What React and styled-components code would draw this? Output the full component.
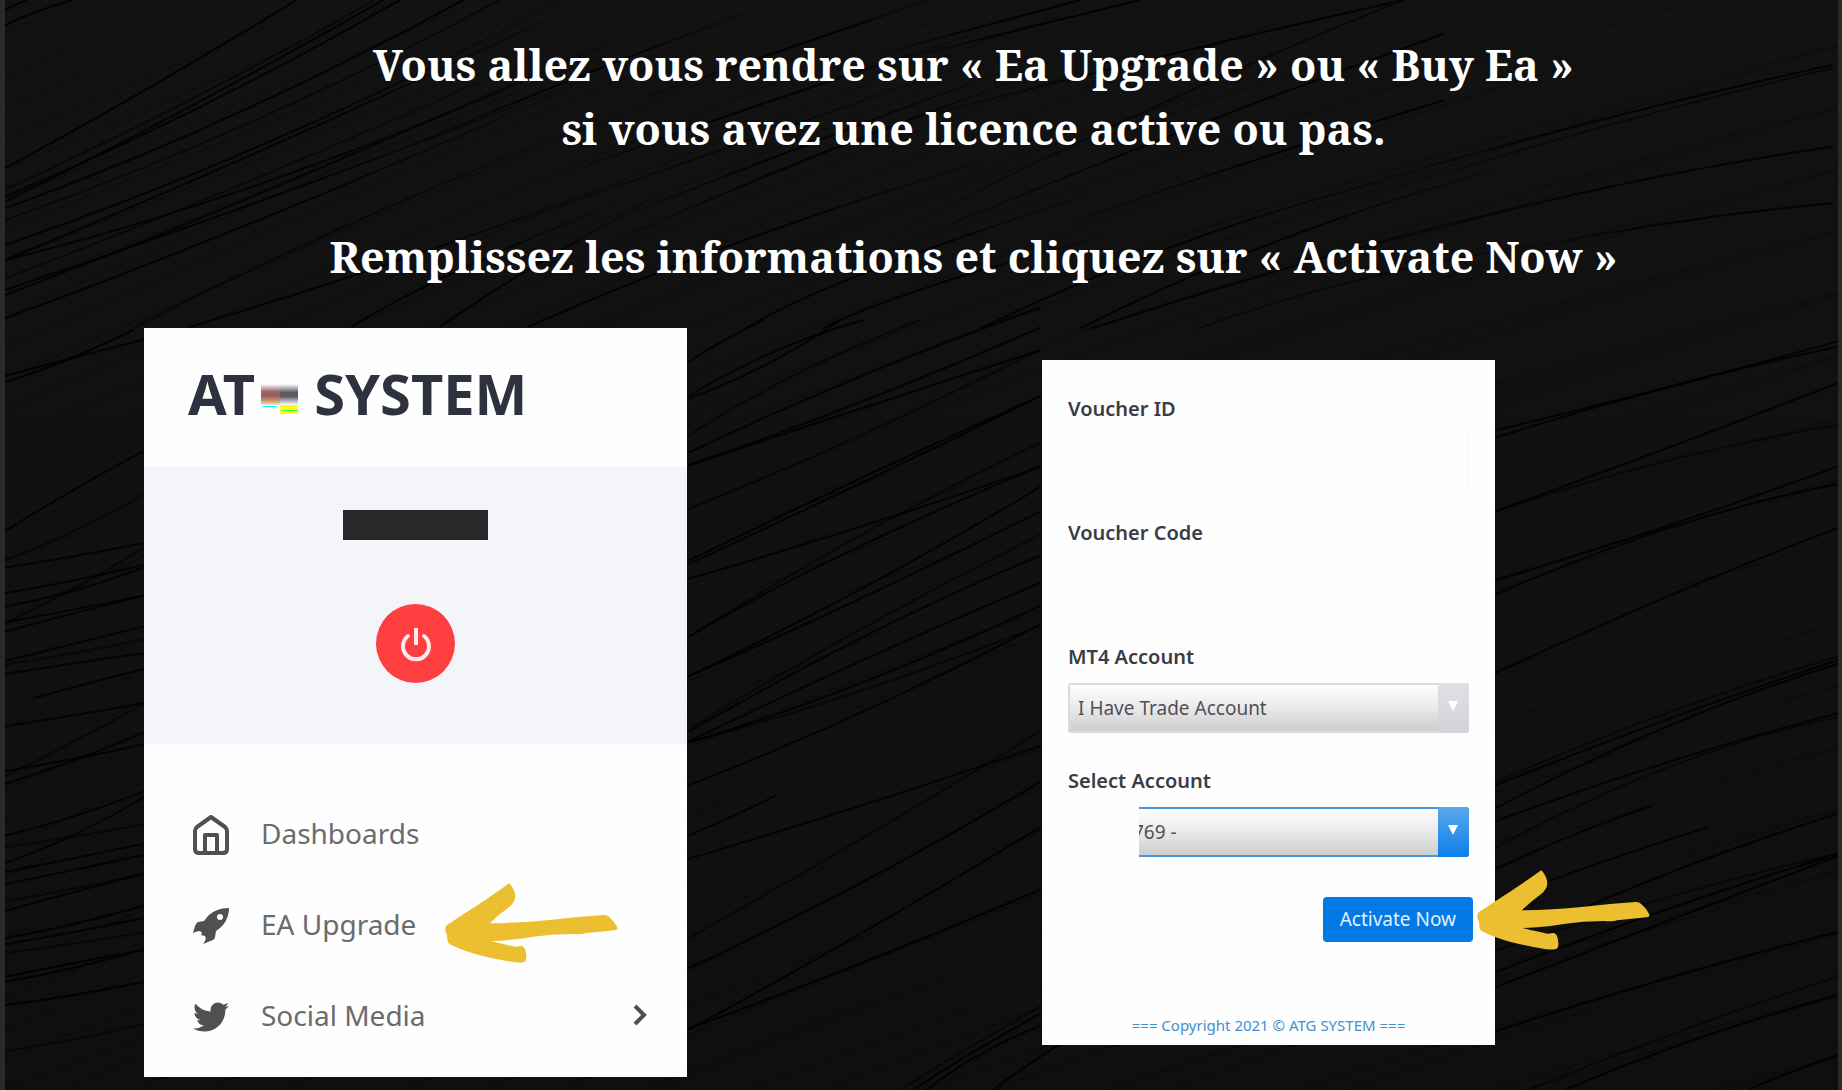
import React from 'react';
import styled, { createGlobalStyle } from 'styled-components';
import { FaTwitter } from 'react-icons/fa';

const GlobalStyle = createGlobalStyle`
  *, *::before, *::after { box-sizing: border-box; }
  body { margin: 0; background: #111; }
`;

const sans = '"Noto Sans", "Open Sans", sans-serif';

const Stage = styled.main`
  position: relative;
  isolation: isolate;
  min-height: 100vh;
  padding: 33px 0 13px;
  border-left: 5px solid #2a2a2a;
  border-right: 4px solid #2a2a2a;
  background: linear-gradient(#121212, #0f0f0f);
  font-family: ${sans};
`;

const Backdrop = styled.svg`
  position: absolute;
  inset: 0;
  z-index: -1;
  width: 100%;
  height: 100%;
`;

const Intro = styled.header`
  display: flex;
  flex-direction: column;
  gap: 64px;
  padding-left: 104px;
  color: #fff;
  font: 700 43px/64px "Noto Serif", "DejaVu Serif", serif;
  text-align: center;
`;

const Instruction = styled.p`
  margin: 0;
`;

const Panels = styled.div`
  display: grid;
  grid-template-columns: 139fr 543fr 355fr 453fr 343fr;
  align-items: start;
  margin-top: 39px;
`;

const Sidebar = styled.aside`
  grid-column: 2;
  background: #fefefe;
`;

const Brand = styled.h1`
  display: flex;
  align-items: center;
  margin: 0;
  padding: 27px 44px 36px;
  color: #2d323e;
  font-size: 56px;
  line-height: 76px;
  font-weight: 700;
`;

const Smudge = styled.svg`
  width: 37px;
  height: 32px;
  margin: 10px 16px 0 6px;
`;

const Profile = styled.section`
  display: flex;
  flex-direction: column;
  align-items: center;
  gap: 64px;
  padding: 43px 0 61px;
  background: #f4f5fa;
`;

const HiddenName = styled.div`
  width: 145px;
  height: 30px;
  background: #282828;
`;

const PowerButton = styled.button`
  display: grid;
  place-items: center;
  width: 79px;
  height: 79px;
  padding: 0;
  border: 0;
  border-radius: 50%;
  background: #ff3f3f;
`;

const Menu = styled.ul`
  margin: 0;
  padding: 43px 0 17px;
  list-style: none;
`;

const MenuItem = styled.li`
  position: relative;
`;

const MenuLink = styled.a`
  display: grid;
  grid-template-columns: 36px 1fr auto;
  column-gap: 32px;
  align-items: center;
  height: 91px;
  padding: 0 40px 0 49px;
  color: #6b6b6d;
  font-size: 28px;
  line-height: 38px;
  text-decoration: none;

  > svg { color: #505050; }
  > svg:first-child { margin-top: 4px; }
`;

const Pointer = styled.svg`
  position: absolute;
  top: ${(p) => p.$top}px;
  left: ${(p) => p.$left};
  width: 173px;
  height: 80px;
  pointer-events: none;
`;

const VoucherCard = styled.section`
  grid-column: 4;
  margin-top: 32px;
  padding: 35px 26px 9px;
  background: #fefefe;
`;

const VoucherForm = styled.form`
  display: flex;
  flex-direction: column;
  gap: 34px;
`;

const Field = styled.div`
  display: grid;
  row-gap: 12px;
`;

const Label = styled.label`
  color: #3b3c45;
  font-size: 20px;
  line-height: 28px;
  font-weight: 600;
`;

const TextInput = styled.input`
  width: 100%;
  height: 50px;
  padding: 0 10px;
  border: 1px solid #fefefe;
  border-right-color: ${(p) => (p.$edge ? '#f4f4f5' : '#fefefe')};
  background: #fefefe;
  color: #4b4c55;
  font: 400 19px/28px ${sans};
`;

const SelectBox = styled.div`
  position: relative;
  display: grid;
  grid-template-columns: 1fr 31px;
  height: 50px;
`;

const Select = styled.select`
  grid-area: 1 / 1 / 2 / 3;
  appearance: none;
  width: 100%;
  padding: 0 40px 0 ${(p) => (p.$active ? 63 : 8)}px;
  border: ${(p) => (p.$active ? '2px solid #4796dc' : '2px solid #dadade')};
  border-radius: 3px;
  background: linear-gradient(#fefefe, #ececec 45%, #cdcdcd);
  color: #4f5058;
  font: 400 19px/28px ${sans};
`;

const DropMark = styled.span`
  grid-area: 1 / 2;
  display: grid;
  place-items: center;
  padding: 0 2px 5px 0;
  border-radius: 0 3px 3px 0;
  background: ${(p) =>
    p.$active ? 'linear-gradient(#5ba7ec, #0d7fe8)' : 'linear-gradient(#dfdfe5, #d3d3da)'};
  pointer-events: none;
`;

const AccountMask = styled.span`
  position: absolute;
  inset: -3px auto -4px -4px;
  width: 75px;
  background: #fefefe;
`;

const Actions = styled.div`
  position: relative;
  display: flex;
  justify-content: flex-end;
  margin: 6px -4px 0 0;
`;

const ActivateButton = styled.button`
  height: 45px;
  padding: 0 17px 2px;
  border: 0;
  border-radius: 4px;
  background: #027ae6;
  color: #e2f0fd;
  font: 400 19px/28px ${sans};
`;

const Copyright = styled.footer`
  margin-top: 72px;
  color: #4290cc;
  font-size: 15px;
  line-height: 22px;
  text-align: center;
`;

/* Each patch holds its origin, its scale and strands given as start, middle and end points. */
const patches = [
  {
    at: [0, 0], scale: [0.3333, 0.3333],
    strands: `15 30 45 15 80 0|15 75 110 35 215 0|15 505 450 262 890 0|15 570 570 300 1125 0
      15 605 580 315 1150 0|15 590 607 318 1200 0|15 625 700 345 1390 0|15 660 757 365 1500 0`,
  },
  {
    at: [0, 0], scale: [0.3333, 0.3333], fade: 'fadeEnd',
    strands: `15 735 900 385 1800 -60|15 780 900 510 1850 120|15 780 900 400 1850 -40|15 835 900 480 1850 60
      15 885 900 530 1850 110|15 870 900 560 1850 200|15 955 900 610 1850 200|400 985 1100 650 1900 320
      570 980 1200 780 1900 530|1055 980 1400 800 1900 590|1320 980 1600 800 1950 600`,
  },
  {
    at: [0, 0], scale: [0.5873, 0.3333], fade: 'fadeBoth',
    strands: `640 480 1000 220 1330 0|1050 320 1350 140 1650 -40|900 560 1300 310 1700 80
      820 700 1260 430 1700 160|1000 690 1380 430 1760 180|1000 760 1400 460 1800 200`,
  },
  {
    at: [0, 0], scale: [0.5873, 0.3333], fade: 'fadeEnd',
    strands: `900 980 1300 700 1760 440|1270 985 1500 800 1900 560|1400 985 1600 850 1900 700`,
  },
  {
    at: [916, 0], scale: [0.5873, 0.3333], fade: 'fadeStart',
    strands: `-100 180 90 90 280 0|-100 210 140 105 380 0|-100 400 370 190 830 0|-100 760 370 350 830 0
      -100 790 400 430 900 100|220 690 560 490 900 300|640 620 1100 390 1560 195|700 630 1130 400 1560 205
      700 780 1130 580 1560 440|1000 760 1280 670 1560 610`,
  },
  {
    at: [916, 0], scale: [0.5873, 0.3333], fade: 'fadeEnd',
    strands: `110 985 500 700 900 500|280 985 650 700 1050 480|300 985 700 770 1100 590|480 985 800 820 1150 710`,
  },
  {
    at: [687, 320], scale: [0.3333, 0.4911],
    strands: `5 85 110 42 230 0|5 155 260 65 530 0|5 160 240 90 460 0|5 235 330 110 700 0|5 270 520 115 1060 -25
      5 295 530 165 1060 15|5 297 500 185 1060 62|5 385 520 235 1060 60
      5 490 560 310 1060 155|5 497 560 320 1060 155|5 527 580 408 1060 298|5 645 530 435 1060 250
      5 645 460 480 1060 298|5 725 530 545 1060 340|5 725 480 580 1060 390|5 833 520 630 1060 437
      5 838 560 635 1060 480|5 858 520 695 1060 535|5 860 500 745 1060 582|5 860 500 760 1060 622
      5 947 530 797 1060 620|5 1050 140 1010 270 967|5 1097 540 985 1060 867|5 1258 540 1050 1060 837
      5 1320 540 1140 1060 940|5 1445 520 1250 1060 1033|5 1443 540 1305 1060 1160
      640 1567 850 1480 1060 1398|680 1567 860 1490 1060 1413|720 1567 880 1495 1060 1437|920 1567 1060 1500 1250 1420`,
  },
  {
    at: [0, 330], scale: [0.3333, 0.4847],
    strands: `15 95 220 57 430 20|15 108 200 62 400 0|15 415 220 330 430 250|15 475 230 412 430 340
      15 490 220 467 430 440|15 543 220 517 430 485|15 570 220 538 430 490|15 605 230 530 430 450
      15 603 220 577 430 548|15 622 220 585 430 548|15 683 220 648 430 612|15 690 220 667 430 638
      15 710 220 688 430 667|100 760 260 730 430 700|15 817 220 795 430 770|15 920 220 850 430 772
      15 910 220 885 430 855|15 937 220 888 430 830|15 1043 220 1004 430 952|15 1067 220 1045 430 1020
      15 1100 220 1042 430 965|15 1118 220 1090 430 1060|15 1143 220 1114 430 1083|15 1178 220 1153 430 1122
      15 1198 220 1160 430 1122|15 1255 220 1226 430 1188|15 1268 220 1242 430 1213|15 1285 220 1266 430 1243
      15 1335 220 1306 430 1280|15 1345 220 1316 430 1278|15 1393 220 1372 430 1345|15 1487 220 1464 430 1432`,
  },
  {
    at: [1490, 0], scale: [0.3333, 0.5486],
    strands: `-20 790 520 708 1045 622|-20 805 520 708 1045 632|-20 940 530 817 1045 698|-20 940 530 840 1045 775
      -20 1065 540 957 1045 850|-20 1093 540 962 1045 882|-20 1237 530 1088 1045 962|-20 1435 530 1300 1045 1197
      -20 1440 530 1312 1045 1203|-20 1485 530 1325 1045 1210|-20 1505 530 1390 1045 1300
      -20 1557 530 1400 1045 1307`,
  },
  {
    at: [1450, 850], scale: [0.3333, 0.3333],
    strands: `120 65 370 -45 600 -130|120 158 460 35 780 -70|400 175 760 30 1165 -110|120 308 660 140 1165 10
      120 373 660 175 1165 12|120 418 660 210 1165 18|120 550 650 385 1165 245|240 717 700 540 1165 378
      350 717 760 560 1165 435|900 717 1040 660 1165 615`,
  },
];

const bend = ([x1, y1, xm, ym, x2, y2]) =>
  `M${x1} ${y1}Q${2 * xm - (x1 + x2) / 2} ${2 * ym - (y1 + y2) / 2} ${x2} ${y2}`;

const readStrands = (text) =>
  text.trim().split(/[|\n]/).map((s) => s.trim().split(/\s+/).map(Number));

const faintStrands = Array.from({ length: 56 }, (_, i) => {
  const y = 40 + i * 31 + ((i * 37) % 19);
  return `M-20 ${y}C520 ${y - 190 - ((i * 53) % 60)} 900 ${y - 420} 1860 ${y - 660 - ((i * 29) % 60)}`;
});

function Strands() {
  return (
    <Backdrop viewBox="5 0 1833 1090" preserveAspectRatio="none" fill="none" stroke="#000" aria-hidden="true">
      <defs>
        <linearGradient id="fadeEnd">
          <stop offset="0.5" />
          <stop offset="1" stopOpacity="0" />
        </linearGradient>
        <linearGradient id="fadeStart">
          <stop offset="0" stopOpacity="0" />
          <stop offset="0.5" />
        </linearGradient>
        <linearGradient id="fadeBoth">
          <stop offset="0" stopOpacity="0" />
          <stop offset="0.4" />
          <stop offset="0.6" />
          <stop offset="1" stopOpacity="0" />
        </linearGradient>
      </defs>
      <g strokeWidth="2" opacity="0.14">
        {faintStrands.map((d) => <path key={d} d={d} />)}
      </g>
      {patches.map((patch, n) => (
        <g
          key={n}
          transform={`translate(${patch.at.join(' ')}) scale(${patch.scale.join(' ')})`}
          stroke={patch.fade ? `url(#${patch.fade})` : '#000'}
        >
          {readStrands(patch.strands).map((points, i) => (
            <path
              key={i}
              d={bend(points)}
              vectorEffect="non-scaling-stroke"
              strokeWidth="2"
              opacity={i % 4 === 3 ? 0.5 : 0.8}
            />
          ))}
        </g>
      ))}
    </Backdrop>
  );
}

function HandArrow({ top, left }) {
  return (
    <Pointer $top={top} $left={left} viewBox="80 60 518 240" aria-hidden="true">
      <path
        fill="#ebbf2f"
        d="M80 198Q80 188 95 180L140 150Q200 112 266 65Q273 56 280 70Q292 90 290 102Q289 118 272 132Q240 155 214 181Q300 180 400 170Q480 161 555 156Q566 155 572 162Q590 178 597 195Q597 201 588 202L500 211Q490 215 460 213L400 215Q350 219 300 228Q260 233 217 234Q260 245 290 251L310 249Q322 252 323 275Q326 290 318 297Q300 301 270 295Q190 281 140 263Q95 247 90 240Q86 235 86 218Q80 208 80 198Z"
      />
    </Pointer>
  );
}

function BrandSmudge() {
  return (
    <Smudge viewBox="0 0 37 32" aria-hidden="true">
      <defs>
        <linearGradient id="smudgeWarm" x2="0" y2="1">
          <stop offset="0" stopColor="#fff" />
          <stop offset="0.35" stopColor="#9d6a6e" />
          <stop offset="0.55" stopColor="#9c5663" />
          <stop offset="0.8" stopColor="#c79a62" />
          <stop offset="1" stopColor="#f3e6d8" />
        </linearGradient>
        <linearGradient id="smudgeGrey" x2="0" y2="1">
          <stop offset="0" stopColor="#fff" />
          <stop offset="0.4" stopColor="#5d5c60" />
          <stop offset="0.6" stopColor="#5d5c60" />
          <stop offset="0.7" stopColor="#8b8ba0" />
          <stop offset="1" stopColor="#fff" />
        </linearGradient>
      </defs>
      <rect y="2" width="19" height="21" fill="url(#smudgeWarm)" />
      <rect x="19" y="2" width="18" height="21" fill="url(#smudgeGrey)" />
      <rect x="1" y="24" width="15" height="1" fill="#0ff" />
      <rect x="19" y="23" width="18" height="9" fill="#fffb1a" />
      <rect x="20" y="28" width="17" height="1" fill="#3f3" />
    </Smudge>
  );
}

function HomeIcon() {
  return (
    <svg width="36" height="40" viewBox="0 0 36 40" fill="none" stroke="currentColor" strokeWidth="4" strokeLinejoin="round" aria-hidden="true">
      <path d="M18 2L4 12Q2 14 2 16V34Q2 38 6 38H30Q34 38 34 34V16Q34 14 32 12Z" />
      <path d="M12 38V20H24V38" />
    </svg>
  );
}

function RocketIcon() {
  return (
    <svg width="36" height="36" viewBox="0 0 36 36" fill="currentColor" fillRule="evenodd" aria-hidden="true">
      <path d="M36 0C27 0 20 3 15 8L11 13L5 14Q3 15 2 18L0 25Q4 23 7 23L9 25L8 27L12 28Q14 31 10 36L20 32Q22 31 22 29L23 23C31 18 36 10 36 0ZM27 6A3 3 0 1 1 27 12A3 3 0 1 1 27 6Z" />
    </svg>
  );
}

function PowerIcon() {
  return (
    <svg width="34" height="36" viewBox="0 0 34 36" fill="none" stroke="#ffe9ee" strokeWidth="4" strokeLinecap="round" aria-hidden="true">
      <path d="M17 2V19" strokeLinecap="butt" />
      <path d="M9 10A13 13 0 1 0 25 10" />
    </svg>
  );
}

function ChevronIcon() {
  return (
    <svg width="14" height="22" viewBox="0 0 14 22" fill="none" stroke="currentColor" strokeWidth="4" aria-hidden="true">
      <path d="M2 2L11 11L2 20" />
    </svg>
  );
}

function SelectField({ id, label, option, active }) {
  return (
    <Field>
      <Label htmlFor={id}>{label}</Label>
      <SelectBox>
        <Select id={id} $active={active}>
          <option>{option}</option>
        </Select>
        <DropMark $active={active}>
          <svg width="10" height="10" viewBox="0 0 10 10" aria-hidden="true">
            <path d="M0 0H10L5 10Z" fill="#fff" />
          </svg>
        </DropMark>
        {active && <AccountMask />}
      </SelectBox>
    </Field>
  );
}

export default function App() {
  return (
    <>
      <GlobalStyle />
      <Stage>
        <Strands />
        <Intro>
          <Instruction>
            Vous allez vous rendre sur « Ea Upgrade » ou « Buy Ea »<br />
            si vous avez une licence active ou pas.
          </Instruction>
          <Instruction>Remplissez les informations et cliquez sur « Activate Now »</Instruction>
        </Intro>
        <Panels>
          <Sidebar>
            <Brand>
              <span>AT</span>
              <BrandSmudge />
              <span>SYSTEM</span>
            </Brand>
            <Profile>
              <HiddenName />
              <PowerButton type="button" aria-label="Power">
                <PowerIcon />
              </PowerButton>
            </Profile>
            <Menu>
              <MenuItem>
                <MenuLink href="#dashboards">
                  <HomeIcon />
                  <span>Dashboards</span>
                </MenuLink>
              </MenuItem>
              <MenuItem>
                <MenuLink href="#upgrade">
                  <RocketIcon />
                  <span>EA Upgrade</span>
                </MenuLink>
                <HandArrow top={5} left="301px" />
              </MenuItem>
              <MenuItem>
                <MenuLink href="#social">
                  <FaTwitter size={36} />
                  <span>Social Media</span>
                  <ChevronIcon />
                </MenuLink>
              </MenuItem>
            </Menu>
          </Sidebar>
          <VoucherCard>
            <VoucherForm>
              <Field>
                <Label htmlFor="voucher-id">Voucher ID</Label>
                <TextInput id="voucher-id" $edge />
              </Field>
              <Field>
                <Label htmlFor="voucher-code">Voucher Code</Label>
                <TextInput id="voucher-code" />
              </Field>
              <SelectField id="mt4-account" label="MT4 Account" option="I Have Trade Account" />
              <SelectField id="select-account" label="Select Account" option="769 -" active />
              <Actions>
                <ActivateButton type="button">Activate Now</ActivateButton>
                <HandArrow top={-27} left="calc(100% + 4px)" />
              </Actions>
            </VoucherForm>
            <Copyright>=== Copyright 2021 © ATG SYSTEM ===</Copyright>
          </VoucherCard>
        </Panels>
      </Stage>
    </>
  );
}
